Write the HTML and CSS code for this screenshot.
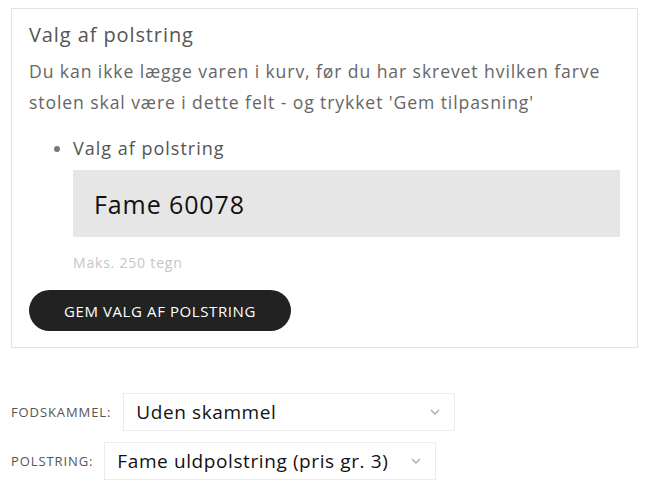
FILE: index.html
```html
<!DOCTYPE html>
<html lang="da">
<head>
<meta charset="utf-8">
<link rel="stylesheet" href="styles.css">
</head>
<body>
<div class="page">
  <section class="box">
    <h3 class="box-title">Valg af polstring</h3>
    <p class="box-text">Du kan ikke lægge varen i kurv, før du har skrevet hvilken farve stolen skal være i dette felt - og trykket 'Gem tilpasning'</p>
    <ul class="fields">
      <li class="field">
        <span class="field-label">Valg af polstring</span>
        <div class="field-input">Fame 60078</div>
        <div class="field-hint">Maks. 250 tegn</div>
      </li>
    </ul>
    <button class="save-btn">GEM VALG AF POLSTRING</button>
  </section>

  <div class="options">
    <div class="option">
      <span class="option-label">FODSKAMMEL:</span>
      <div class="select select-a">
        <span class="select-value">Uden skammel</span>
        <svg class="chev" width="10" height="6" viewBox="0 0 10 6"><path d="M1 1l4 4 4-4" fill="none" stroke="#aaa" stroke-width="1.4"/></svg>
      </div>
    </div>
    <div class="option">
      <span class="option-label">POLSTRING:</span>
      <div class="select select-b">
        <span class="select-value">Fame uldpolstring (pris gr. 3)</span>
        <svg class="chev" width="10" height="6" viewBox="0 0 10 6"><path d="M1 1l4 4 4-4" fill="none" stroke="#aaa" stroke-width="1.4"/></svg>
      </div>
    </div>
  </div>
</div>
</body>
</html>
```

FILE: styles.css
```css
* { box-sizing: border-box; }
html, body { margin: 0; padding: 0; background: #fff; }
body { font-family: "Open Sans", "DejaVu Sans", sans-serif; color: #555; }

.page { padding: 8px 0 0 11px; width: 662px; }

.box {
  width: 627px;
  border: 1px solid #e3e3e3;
  padding: 12px 17px 16px 17px;
}
.box-title {
  margin: 0;
  font-size: 20px;
  letter-spacing: 0.9px;
  font-weight: 500;
  line-height: 28px;
  color: #555;
}
.box-text {
  margin: 7px 0 0;
  font-size: 17.6px;
  letter-spacing: 0.9px;
  line-height: 31px;
  color: #666;
}
.fields {
  margin: 16px 0 0;
  padding: 0 0 0 44px;
  list-style: disc;
  color: #555;
}
.field::marker { color: #777; font-size: 17px; }
.field-label { font-size: 18px; letter-spacing: 1px; line-height: 28px; color: #555; }
.field-input {
  margin-top: 8px;
  height: 67px;
  width: 547px;
  background: #e6e6e6;
  padding: 0 21px;
  display: flex;
  align-items: center;
  font-size: 25px;
  letter-spacing: 0.9px;
  font-weight: 500;
  color: #111;
}
.field-hint {
  margin-top: 16px;
  font-size: 14px;
  letter-spacing: 0.8px;
  line-height: 20px;
  color: #c6c6c6;
}
.save-btn {
  margin-top: 17px;
  display: block;
  width: 262px;
  height: 41px;
  border: 0;
  border-radius: 21px;
  background: #222;
  color: #fff;
  font-family: inherit;
  font-size: 15px;
  letter-spacing: 0.6px;
  font-weight: 500;
}

.options { margin-top: 45px; display: flex; flex-direction: column; gap: 11px; }
.option { display: flex; align-items: center; }
.option-label { font-size: 13px; letter-spacing: 0.9px; color: #555; font-weight: 500; }
.select {
  height: 38px;
  border: 1px solid #ececec;
  display: flex;
  align-items: center;
  justify-content: space-between;
  padding: 0 14px 0 12px;
}
.select-a { margin-left: 12px; width: 332px; }
.select-b { margin-left: 11px; width: 332px; }
.select-value { font-size: 19px; letter-spacing: 0.6px; color: #111; }
.chev { display: block; }
```
